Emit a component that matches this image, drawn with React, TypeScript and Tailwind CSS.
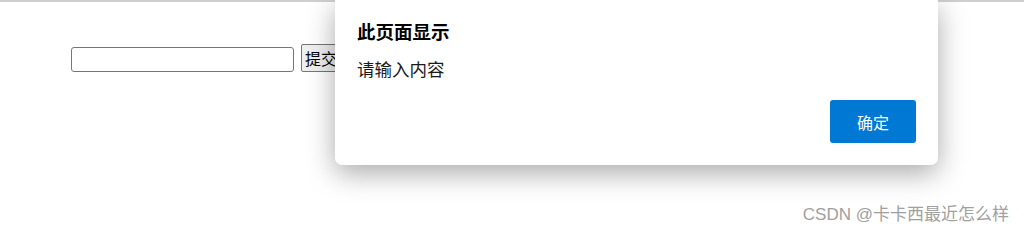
import React from "react";

export default function App() {
  const cjk = { fontFamily: '"Microsoft YaHei", "Noto Sans CJK SC", "Noto Sans", sans-serif' };
  return (
    <div className="relative w-[1024px] h-[231px] bg-white overflow-hidden" style={cjk}>
      <div className="h-[3px] border-t-2 border-[#cfcfcf] w-full mt-[0px]" />
      <div className="flex items-end gap-[7px] pl-[71px] pt-[41px]">
        <input
          type="text"
          className="w-[223px] h-[25px] border border-[#767676] rounded-[3px] bg-white"
        />
        <button
          className="h-[28px] px-[3px] border border-[#767676] rounded-[2px] bg-[#efefef] text-[16px] leading-[26px] text-black"
          style={{ fontFamily: '"Noto Sans CJK SC", sans-serif' }}
        >
          提交
        </button>
      </div>

      <div className="absolute left-[335px] top-0 w-[603px] h-[165px] bg-white rounded-b-[7px] shadow-[0_8px_28px_rgba(0,0,0,0.34)] flex flex-col px-[22px]">
        <div className="pt-[19px] text-[18.5px] font-bold leading-[24px] text-black">此页面显示</div>
        <div className="pt-[14px] text-[17.5px] leading-[24px] text-[#1a1a1a]">请输入内容</div>
        <div className="flex justify-end mt-[19px]">
          <button className="w-[86px] h-[43px] bg-[#0078d4] rounded-[3px] text-white text-[16px]">
            确定
          </button>
        </div>
      </div>

      <div
        className="absolute right-[15px] top-[203px] text-[17px] leading-[24px] text-[#a0a0a0]"
        style={{ fontFamily: '"Liberation Sans", "Noto Sans CJK SC", sans-serif' }}
      >
        CSDN @卡卡西最近怎么样
      </div>
    </div>
  );
}
